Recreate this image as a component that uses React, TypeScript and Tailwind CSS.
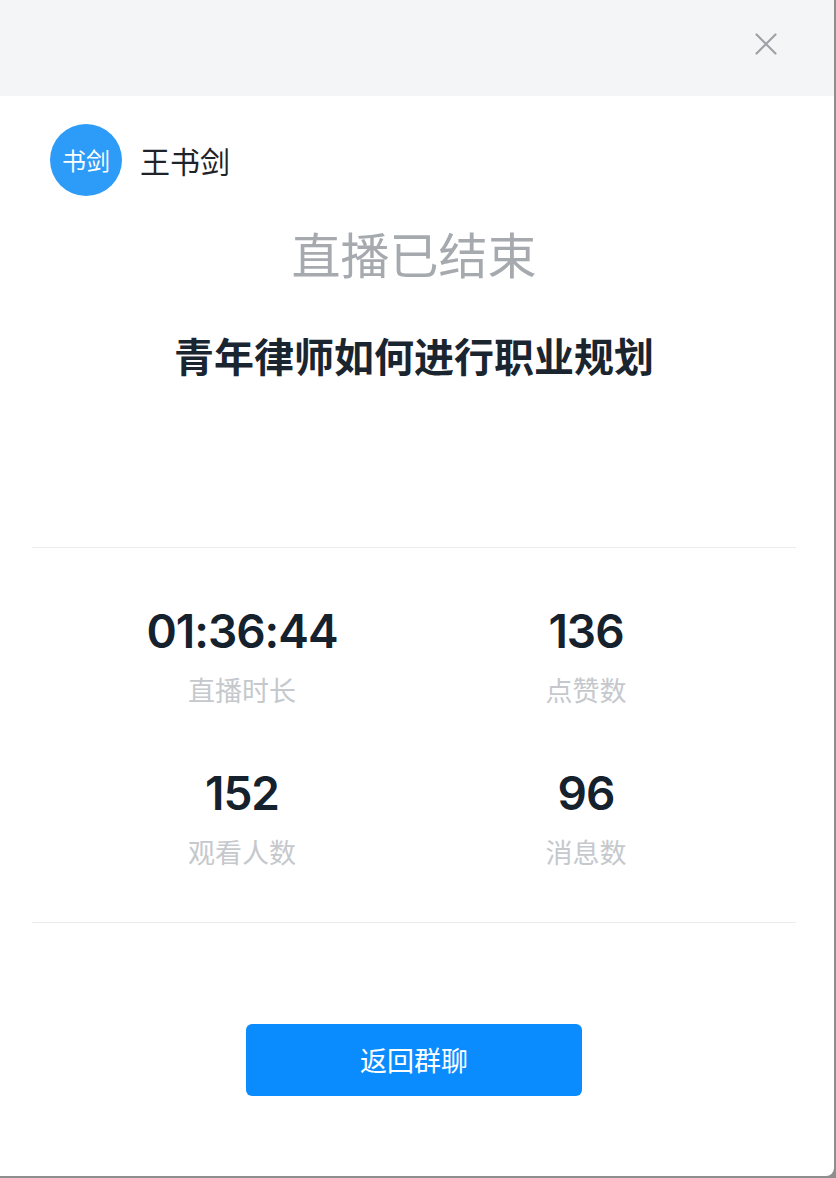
const cjk = { fontFamily: '"Noto Sans CJK SC", "Noto Sans", sans-serif' };
const num = { fontFamily: 'Inter, "Liberation Sans", "Noto Sans CJK SC", sans-serif' };

type Stat = { value: string; label: string };

const stats: Stat[] = [
  { value: "01:36:44", label: "直播时长" },
  { value: "136", label: "点赞数" },
  { value: "152", label: "观看人数" },
  { value: "96", label: "消息数" },
];

const CloseIcon = () => (
  <svg width="22" height="22" viewBox="0 0 22 22" fill="none" stroke="currentColor" strokeWidth="2.2" strokeLinecap="round">
    <path d="M1.5 1.5 20.5 20.5M20.5 1.5 1.5 20.5" />
  </svg>
);

const StatItem = ({ value, label }: Stat) => (
  <div className="flex flex-col items-center">
    <div
      style={num}
      className="text-[46px] leading-[56px] font-semibold text-[#15212d] tracking-[-1px]">
      {value}
    </div>
    <div style={cjk} className="mt-[13px] text-[27px] leading-[36px] text-[#c5c8cc]">
      {label}
    </div>
  </div>
);

export default function App() {
  return (
    <div className="w-[836px] h-[1178px] bg-[#8e8e8e]">
      <div
        style={cjk}
        className="w-[834px] h-[1176px] bg-white rounded-br-[8px] overflow-hidden flex flex-col">
        {/* header */}
        <div className="h-[96px] shrink-0 bg-[#f4f5f7] flex justify-end items-start pt-[33px] pr-[57px]">
          <button className="text-[#9ea2a7]" aria-label="关闭">
            <CloseIcon />
          </button>
        </div>

        <div className="flex flex-col pr-[6px]">
          {/* host */}
          <div className="flex items-center gap-[18px] pt-[28px] px-[50px]">
            <div className="w-[72px] h-[72px] rounded-full bg-[#2d9bf8] flex items-center justify-center text-white text-[24px]">
              书剑
            </div>
            <div className="text-[30px] text-[#1f2329]">王书剑</div>
          </div>

          <div className="mt-[28px] text-center text-[49px] leading-[58px] text-[#a6aaaf]">
            直播已结束
          </div>

          <div className="mt-[48px] text-center text-[40px] leading-[50px] font-bold text-[#1a2530]">
            青年律师如何进行职业规划
          </div>

          {/* stats */}
          <div className="mx-[32px] mt-[167px] border-t border-b border-[#ececec] pt-[55px] pb-[52px]">
            <div className="grid grid-cols-2 gap-y-[57px] px-[38px]">
              {stats.map((s) => (
                <StatItem key={s.label} {...s} />
              ))}
            </div>
          </div>

          <div className="flex justify-center mt-[101px]">
            <button className="w-[336px] h-[72px] rounded-[6px] bg-[#0a8cff] text-white text-[27px]">
              返回群聊
            </button>
          </div>
        </div>
      </div>
    </div>
  );
}
